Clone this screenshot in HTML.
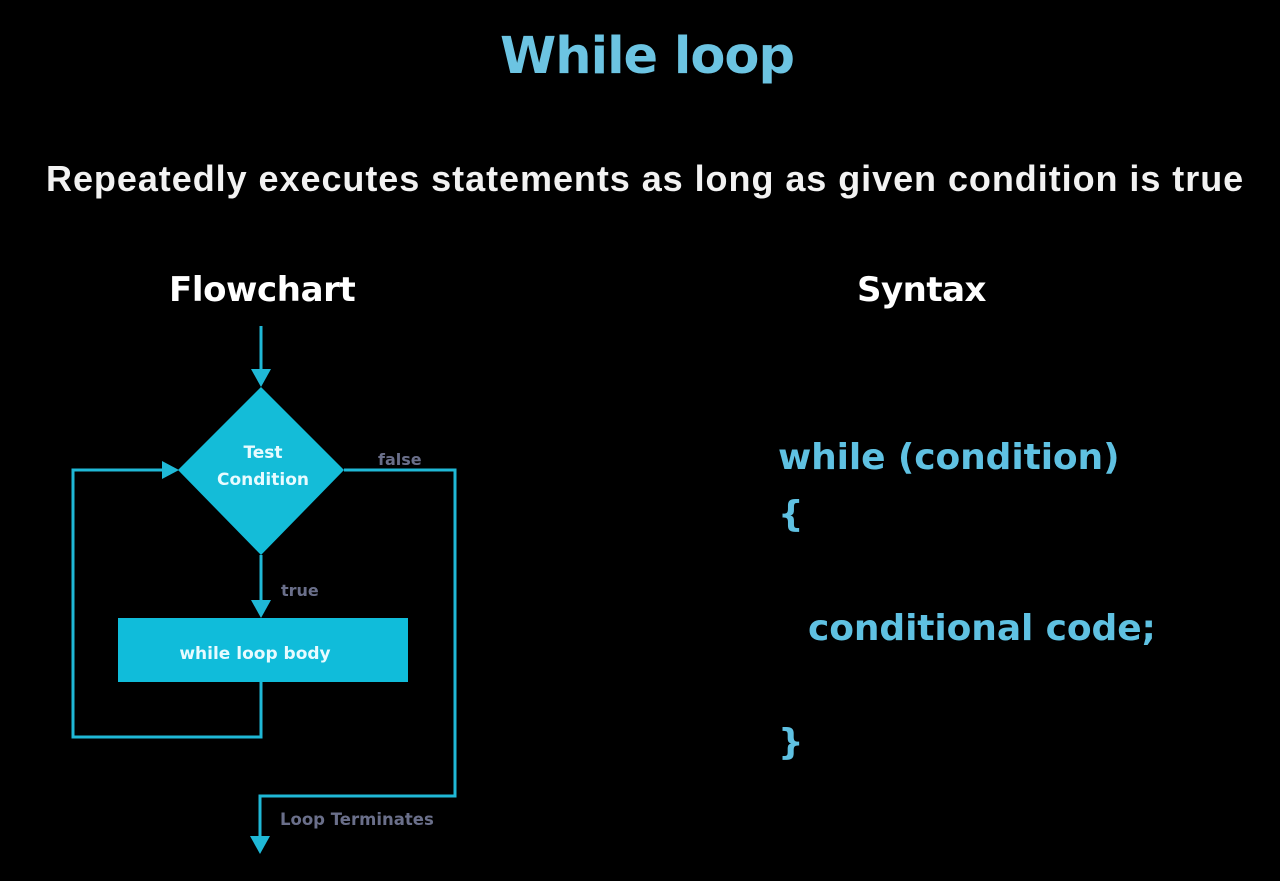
<!DOCTYPE html>
<html><head><style>
body{margin:0;width:1280px;height:881px;background:#000;overflow:hidden;position:relative;font-family:"Liberation Sans",sans-serif}
.t{position:absolute;white-space:nowrap}
</style></head><body>
<div class="t" style="left:0;width:1294px;text-align:center;top:27px;font-size:51px;font-weight:bold;color:#6cc4e2;font-family:'DejaVu Sans',sans-serif;letter-spacing:-1px">While loop</div>
<div class="t" style="left:46px;top:158px;font-size:36px;font-weight:bold;color:#f2f2f2;letter-spacing:0.95px">Repeatedly executes statements as long as given condition is true</div>
<div class="t" style="left:169px;top:270px;font-size:34px;font-weight:bold;color:#fff;font-family:'DejaVu Sans',sans-serif;letter-spacing:-0.4px">Flowchart</div>
<div class="t" style="left:857px;top:270px;font-size:34px;font-weight:bold;color:#fff;font-family:'DejaVu Sans',sans-serif;letter-spacing:-0.5px">Syntax</div>
<div style="position:absolute;left:778px;top:429px;font-size:36px;font-weight:bold;color:#5fc1e2;font-family:'DejaVu Sans',sans-serif;line-height:57px;letter-spacing:-0.1px">
<div>while (condition)</div><div>{</div><div>&nbsp;</div><div style="padding-left:30px">conditional code;</div><div>&nbsp;</div><div>}</div></div>
<svg width="1280" height="881" style="position:absolute;left:0;top:0">
<g stroke="#1fb8d6" stroke-width="3" fill="none">
<path d="M261 326V372"/>
<path d="M261 555V604"/>
<path d="M261 682V737H73V470H164"/>
<path d="M344 470H455V796H260V838"/>
</g>
<g fill="#1fb8d6">
<polygon points="251,369 271,369 261,387"/>
<polygon points="251,600 271,600 261,618"/>
<polygon points="162,461 162,479 179,470"/>
<polygon points="250,836 270,836 260,854"/>
<polygon points="261,387 344,470 261,555 178,470" fill="#14bcd8"/>
<rect x="118" y="618" width="290" height="64" fill="#10bcda"/>
</g>
<g font-family="'DejaVu Sans',sans-serif" font-weight="bold">
<text x="263" y="458" fill="#e8fbff" font-size="17" text-anchor="middle">Test</text>
<text x="263" y="485" fill="#e8fbff" font-size="17" text-anchor="middle">Condition</text>
<text x="255" y="659" fill="#e8fbff" font-size="17" text-anchor="middle">while loop body</text>
<text x="378" y="465" fill="#6a6f8a" font-size="16">false</text>
<text x="281" y="596" fill="#6a6f8a" font-size="16">true</text>
<text x="280" y="825" fill="#6a6f8a" font-size="16.5">Loop Terminates</text>
</g>
</svg>
</body></html>
